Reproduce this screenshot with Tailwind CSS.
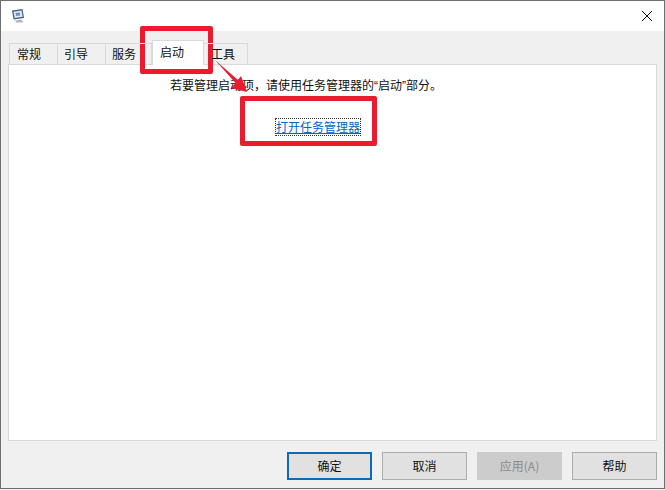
<!DOCTYPE html>
<html><head><meta charset="utf-8"><script src="https://cdn.jsdelivr.net/npm/@tailwindcss/browser@4"></script></head>
<body class="m-0 overflow-hidden">
<div class="relative w-[665px] h-[490px] overflow-hidden bg-[#f0f0f0] font-['Noto_Sans_CJK_SC','Liberation_Sans',sans-serif] text-[12px] text-[#111]">
<div class="relative w-[665px] h-[489px] flex flex-col border border-[#6e6e6e] bg-[#f0f0f0]">
  <div class="h-[30px] bg-white flex items-center justify-between pl-[9px] pr-[9px] shrink-0">
    <svg width="16" height="16" viewBox="0 0 16 16"><path d="M2 2.5L12.5 1L14 10L3.5 11.5Z" fill="#3f5f8c"/><path d="M3.5 3.7L11.6 2.6L12.6 8.8L4.6 9.9Z" fill="#dfe9f7"/><path d="M5.5 5L9.8 4.4L10.2 7.4L6 8Z" fill="#6f90bd"/><path d="M5 12.5L11 11.5L13.5 14.5H6Z" fill="#b3b3bd"/></svg>
    <svg width="12" height="12" viewBox="0 0 12 12" class="mr-[2px]"><path d="M1 1l10 10M11 1L1 11" stroke="#111" stroke-width="1" fill="none"/></svg>
  </div>
  <div class="h-[12px] shrink-0"></div>
  <div class="flex pl-[8px] h-[21px] items-end shrink-0 relative z-10">
    <div class="w-[49px] h-[21px] pl-[7px] border border-b-0 border-[#d9d9d9] flex items-center">常规</div>
    <div class="w-[48px] h-[21px] pl-[6px] border border-b-0 border-l-0 border-[#d9d9d9] flex items-center">引导</div>
    <div class="w-[46px] h-[21px] pl-[6px] border border-b-0 border-l-0 border-[#d9d9d9] flex items-center">服务</div>
    <div class="w-[52px] h-[25px] -mb-px pl-[7px] pb-[3px] border border-b-0 border-[#d9d9d9] bg-white flex items-center">启动</div>
    <div class="w-[44px] h-[21px] pl-[7px] border border-b-0 border-l-0 border-[#d9d9d9] flex items-center">工具</div>
  </div>
  <div class="mx-[7px] h-[377px] shrink-0 bg-white border border-[#d9d9d9] flex flex-col items-start pl-[161px]">
    <p class="mt-[11px] leading-[18px] whitespace-nowrap">若要管理启动项，请使用任务管理器的<span class="font-['Liberation_Sans']">“</span>启动<span class="font-['Liberation_Sans']">”</span>部分。</p>
    <a class="mt-[24px] ml-[106px] leading-[16px] text-[#0066cc] underline outline-1 outline-dotted outline-[#333]">打开任务管理器</a>
  </div>
  <div class="flex justify-end gap-[10px] pt-[11px] pr-[7px]">
    <button class="w-[85px] h-[28px] border-2 border-[#0a6cb8] bg-[#e1e1e1]">确定</button>
    <button class="w-[85px] h-[28px] border border-[#adadad] bg-[#e1e1e1]">取消</button>
    <button class="w-[85px] h-[28px] border border-[#cccccc] bg-[#cccccc] text-[#8a8a8a]">应用(A)</button>
    <button class="w-[85px] h-[28px] border border-[#adadad] bg-[#e1e1e1]">帮助</button>
  </div>
</div>
  <div class="absolute left-[140px] top-[26px] w-[73px] h-[48px] border-[5px] border-[#e81c2e] rounded-[2px]"></div>
  <div class="absolute left-[240px] top-[96px] w-[137px] h-[50px] border-[5px] border-[#e81c2e] rounded-[2px]"></div>
  <svg class="absolute left-[210px] top-[55px]" width="48" height="45" viewBox="0 0 48 45"><path d="M5 5L28 25L31 21L37 37L21 33L25.5 28Z" fill="#e81c2e"/></svg>
</div>
</body></html>
